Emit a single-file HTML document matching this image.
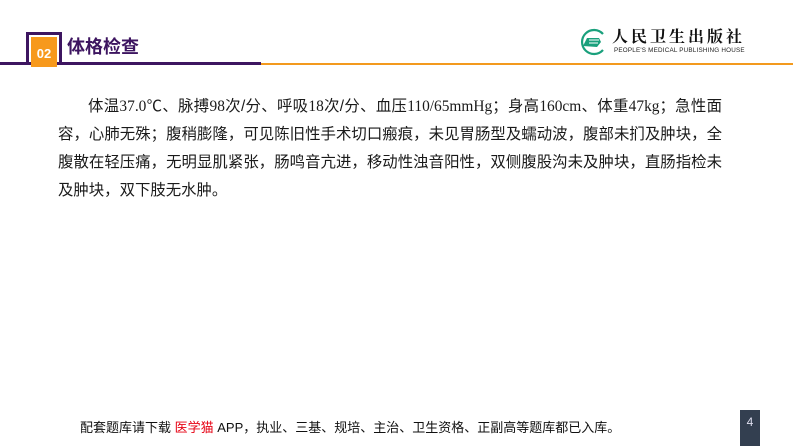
<!DOCTYPE html>
<html><head><meta charset="utf-8"><style>
html,body{margin:0;padding:0;}
body{width:793px;height:446px;position:relative;overflow:hidden;background:#fff;font-family:"Liberation Sans","Noto Sans CJK SC",sans-serif;}
.abs{position:absolute;}
.ln{position:absolute;left:58px;width:664px;font-size:15.4px;line-height:20px;color:#1a1a1a;text-align:justify;text-align-last:justify;white-space:nowrap;}
.ser{font-family:"Liberation Serif","Noto Sans CJK SC",serif;}
</style></head><body>
<div class="abs" style="left:0;top:62px;width:261px;height:3px;background:#3d1560"></div>
<div class="abs" style="left:261px;top:63px;width:532px;height:2px;background:#f39a1e"></div>
<div class="abs" style="left:26px;top:32px;width:30px;height:29px;border:3px solid #3d1560;border-bottom:none"></div>
<div class="abs" style="left:31px;top:37px;width:26px;height:30px;background:#f7991c;color:#fff;font-weight:bold;font-size:13px;line-height:30px;text-align:center;padding-top:2px;box-sizing:border-box">02</div>
<div class="abs" style="left:67px;top:36px;font-size:18px;font-weight:bold;color:#3d1560;line-height:22px">体格检查</div>
<svg class="abs" style="left:577px;top:28px" width="30" height="28" viewBox="0 0 30 28"><path d="M26 6 A12 12 0 1 0 26 22" fill="none" stroke="#1aa07c" stroke-width="2.2"/><path d="M6 18 L10 10 L22 10 L24 14 L20 19 Z" fill="#1aa07c"/><path d="M12 12 L22 12 M12 15 L21 15" stroke="#fff" stroke-width="1"/></svg>
<div class="abs" style="left:612px;top:27px;font-size:16px;font-weight:bold;letter-spacing:3px;color:#111;line-height:18px;font-family:'Noto Serif CJK SC',serif">人民卫生出版社</div>
<div class="abs" style="left:614px;top:47px;font-size:6.3px;color:#222;line-height:8px;letter-spacing:0.2px">PEOPLE'S MEDICAL PUBLISHING HOUSE</div>
<div class="ln" style="top:97px;left:88px;width:634px">体温<span class="ser">37.0℃</span>、脉搏<span class="ser">98</span>次/分、呼吸<span class="ser">18</span>次/分、血压<span class="ser">110/65mmHg</span>；身高<span class="ser">160cm</span>、体重<span class="ser">47kg</span>；急性面</div>
<div class="ln" style="top:125px">容，心肺无殊；腹稍膨隆，可见陈旧性手术切口瘢痕，未见胃肠型及蠕动波，腹部未扪及肿块，全</div>
<div class="ln" style="top:153px">腹散在轻压痛，无明显肌紧张，肠鸣音亢进，移动性浊音阳性，双侧腹股沟未及肿块，直肠指检未</div>
<div class="ln" style="top:181px;text-align-last:left;width:auto">及肿块，双下肢无水肿。</div>
<div class="abs" style="left:80px;top:420px;font-size:13px;line-height:16px;color:#111">配套题库请下载 <span style="color:#e60012">医学猫</span> APP，执业、三基、规培、主治、卫生资格、正副高等题库都已入库。</div>
<div class="abs" style="left:740px;top:410px;width:20px;height:36px;background:#333f50;color:#dde;font-size:12px;text-align:center;line-height:24px">4</div>
</body></html>
